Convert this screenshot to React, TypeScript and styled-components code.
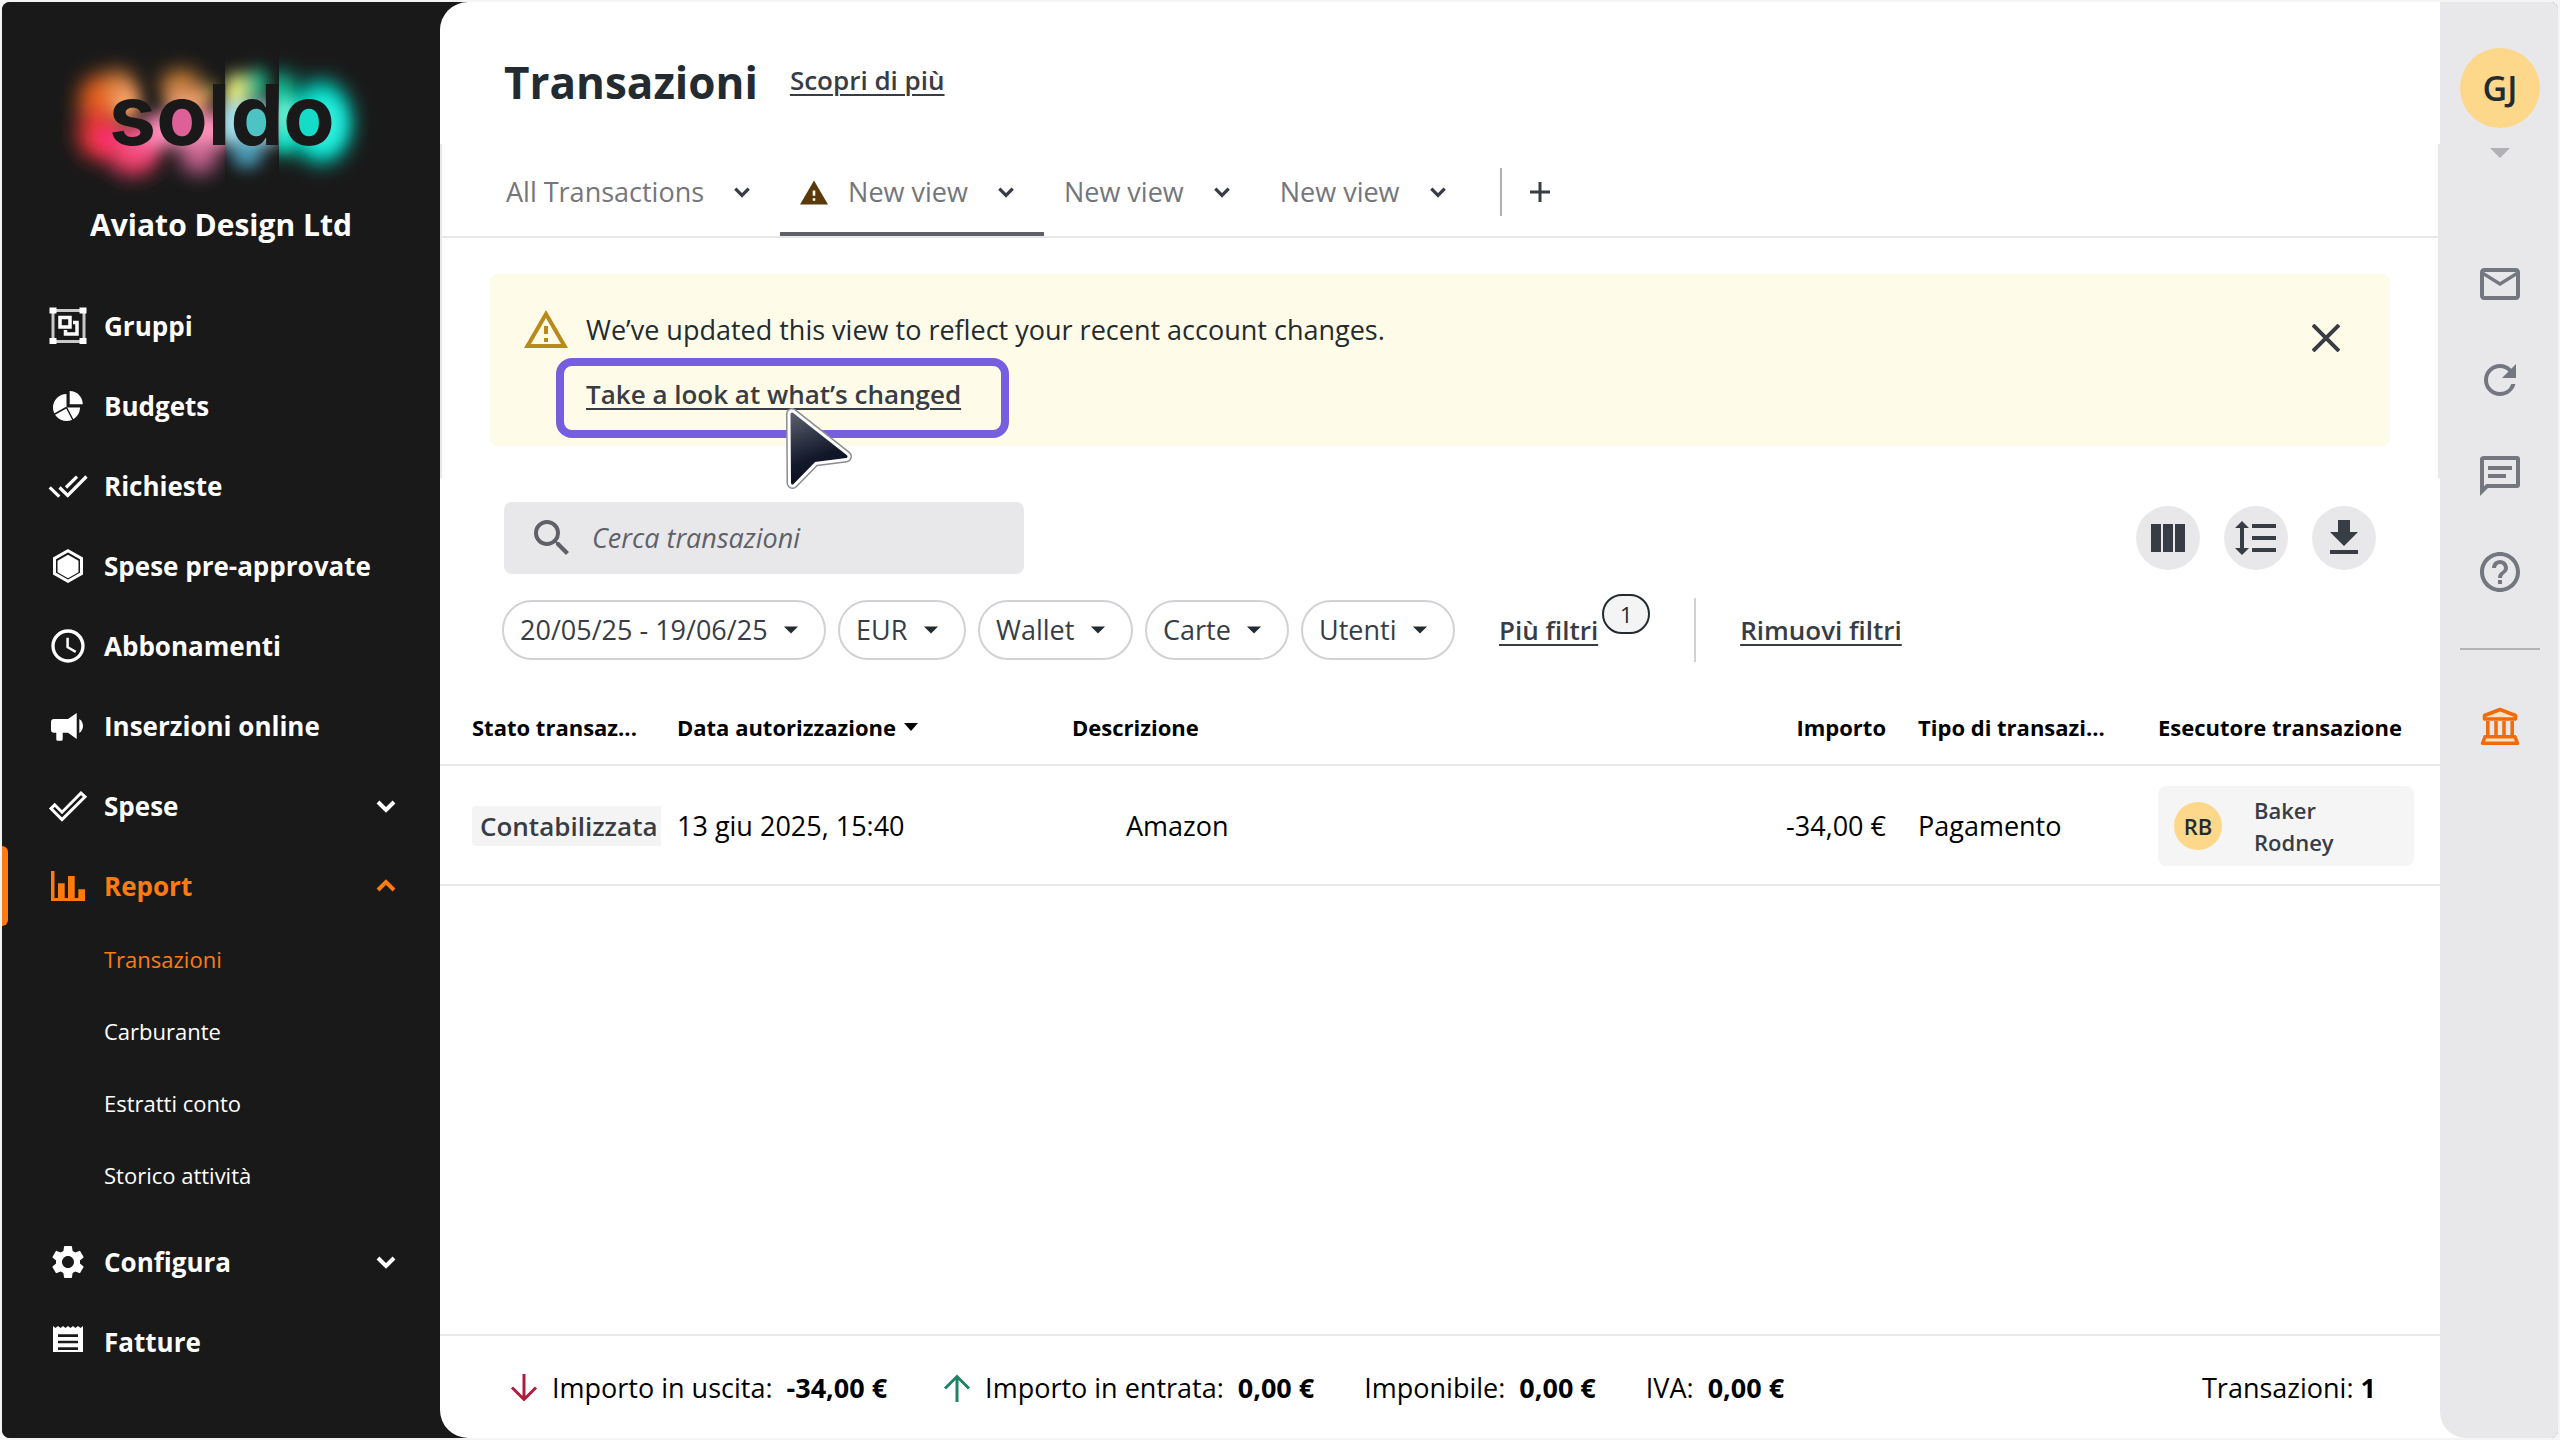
import React from "react";
import styled, { createGlobalStyle } from "styled-components";
import { MdAccessTime, MdHelpOutline, MdMailOutline, MdRefresh, MdSearch, MdSettings } from "react-icons/md";

const ink = "#383d45";
const orange = "#ff7b0f";
const line = "#e8e8ea";

const GlobalStyle = createGlobalStyle`
  *, *::before, *::after { box-sizing: border-box; }
  body {
    margin: 0;
    background: #f4f4f5;
    color: #000;
    font-family: "Open Sans", "Noto Sans", sans-serif;
    font-size: 27px;
    line-height: 40px;
  }
  button, input, select { font: inherit; color: inherit; }
  button { padding: 0; border: 0; background: none; cursor: pointer; }
  svg { display: block; flex: none; }
  h1, p, ul, dl, dd { margin: 0; padding: 0; }
  ul { list-style: none; }
`;

const Page = styled.div`
  min-height: 100vh;
  padding: 2px;
  display: flex;
`;

const Shell = styled.div`
  flex: 1;
  display: grid;
  grid-template-columns: 438px minmax(0, 1fr) 118px;
  border-radius: 8px;
  overflow: hidden;
  background: #191919;
`;

/* ---------- Sidebar ---------- */

const Sidebar = styled.aside`
  padding: 38px 0;
  background: #191919;
  color: #fff;
`;

const LogoBox = styled.div`
  display: flex;
  justify-content: center;
`;

const Company = styled.p`
  margin-bottom: 36px;
  text-align: center;
  font-size: 30px;
  font-weight: 700;
  line-height: 50px;
`;

const NavLink = styled.a<{ $active?: boolean }>`
  height: 80px;
  padding: 0 42px 0 46px;
  display: flex;
  align-items: center;
  gap: 16px;
  position: relative;
  color: ${(p) => (p.$active ? orange : "#fff")};
  font-size: 26px;
  font-weight: 700;
  text-decoration: none;

  &::before {
    content: "";
    display: ${(p) => (p.$active ? "block" : "none")};
    position: absolute;
    inset: 0 auto 0 0;
    width: 6px;
    border-radius: 0 6px 6px 0;
    background: ${orange};
  }
`;

const NavText = styled.span`
  flex: 1;
`;

const SubList = styled.ul`
  padding-bottom: 8px;
`;

const SubLink = styled.a<{ $active?: boolean }>`
  height: 72px;
  padding: 0 42px 6px 102px;
  display: flex;
  align-items: center;
  color: ${(p) => (p.$active ? orange : "#fff")};
  font-size: 22px;
  text-decoration: none;
`;

/* ---------- Main column ---------- */

const MainWrap = styled.div`
  display: flex;
  background: linear-gradient(to right, #191919 50%, #fff 50%);
`;

const Main = styled.main`
  flex: 1;
  min-width: 0;
  display: flex;
  flex-direction: column;
  border-radius: 28px 0 0 28px;
  background: #fff;
`;

const Header = styled.header`
  height: 142px;
  padding: 48px 64px 0;
  display: flex;
  align-items: flex-start;
  gap: 32px;
`;

const Title = styled.h1`
  color: #232b30;
  font-size: 44px;
  line-height: 64px;
`;

const TextLink = styled.a`
  color: ${ink};
  font-size: 26px;
  font-weight: 600;
  line-height: 40px;
  text-decoration: underline;
  text-decoration-thickness: 2px;
  text-underline-offset: 4px;
`;

const HeaderLink = styled(TextLink)`
  line-height: 60px;
`;

const ViewSection = styled.section`
  padding-bottom: 32px;
  border: solid ${line};
  border-width: 0 2px;
`;

const Tabs = styled.nav`
  height: 94px;
  padding-left: 44px;
  display: flex;
  align-items: stretch;
  border-bottom: 2px solid ${line};
`;

const Tab = styled.button<{ $active?: boolean }>`
  padding: 8px 20px 0;
  display: flex;
  align-items: center;
  gap: 20px;
  border-bottom: 4px solid ${(p) => (p.$active ? "#5f6068" : "transparent")};
  color: #75757c;
`;

const TabChevron = styled.span`
  width: 36px;
  display: flex;
  justify-content: center;
  color: ${ink};
`;

const AddView = styled.div`
  margin: 24px 0 0 24px;
  height: 48px;
  padding-left: 16px;
  display: flex;
  border-left: 2px solid #b0b0b4;
  color: ${ink};
`;

const AddButton = styled.button`
  width: 44px;
  display: flex;
  align-items: center;
  justify-content: center;
`;

const Banner = styled.div`
  margin: 36px 48px 0;
  padding: 36px 40px 32px 32px;
  display: flex;
  gap: 16px;
  border-radius: 8px;
  background: #fefce8;
  color: #232b30;
`;

const BannerIcon = styled.span`
  height: 40px;
  display: flex;
  align-items: center;
  color: #b8891b;
`;

const BannerBody = styled.div`
  flex: 1;
  display: flex;
  flex-direction: column;
  align-items: flex-start;
  gap: 24px;
`;

const LinkAnchor = styled.div`
  height: 40px;
  position: relative;
`;

const Highlight = styled.span`
  position: absolute;
  inset: -16px -48px -24px -30px;
  border: 8px solid #755fdf;
  border-radius: 16px;
  pointer-events: none;
`;

const Pointer = styled.svg`
  position: absolute;
  left: 194px;
  top: 26px;
  pointer-events: none;
`;

const CloseButton = styled.button`
  width: 48px;
  height: 48px;
  margin-top: 4px;
  display: flex;
  align-items: center;
  justify-content: center;
  color: ${ink};
`;

const Toolbar = styled.div`
  padding: 24px 64px 0;
  display: flex;
  justify-content: space-between;
  align-items: center;
`;

const SearchBox = styled.label`
  width: 520px;
  height: 72px;
  padding: 0 24px;
  display: flex;
  align-items: center;
  gap: 16px;
  border-radius: 8px;
  background: ${line};
  color: #5f6068;
`;

const SearchInput = styled.input`
  flex: 1;
  min-width: 0;
  padding: 0;
  border: 0;
  outline: 0;
  background: none;
  font-style: italic;

  &::placeholder { color: #5f6068; opacity: 1; }
`;

const Actions = styled.div`
  display: flex;
  gap: 24px;
`;

const RoundButton = styled.button`
  width: 64px;
  height: 64px;
  display: flex;
  align-items: center;
  justify-content: center;
  border-radius: 50%;
  background: ${line};
  color: ${ink};
`;

const Filters = styled.div`
  padding: 24px 62px 30px;
  display: flex;
  align-items: center;
  gap: 44px;
`;

const PillGroup = styled.div`
  display: flex;
  gap: 12px;
`;

const Pill = styled.label`
  height: 60px;
  padding: 0 16px;
  display: flex;
  align-items: center;
  gap: 6px;
  border: 2px solid #d2d2d6;
  border-radius: 30px;
  color: ${ink};
`;

const PillSelect = styled.select`
  appearance: none;
  padding: 0;
  border: 0;
  outline: 0;
  background: none;
`;

const MoreFilters = styled.div`
  padding-right: 52px;
  position: relative;
`;

const CountBadge = styled.span`
  position: absolute;
  right: 0;
  top: -16px;
  width: 48px;
  height: 40px;
  display: flex;
  align-items: center;
  justify-content: center;
  border: 2px solid #232b30;
  border-radius: 20px;
  background: #f4f4f5;
  color: #232b30;
  font-size: 22px;
`;

const FilterRule = styled.span`
  width: 2px;
  height: 64px;
  background: #d2d2d6;
`;

/* ---------- Table ---------- */

const Table = styled.table`
  width: 100%;
  table-layout: fixed;
  border-collapse: separate;
  border-spacing: 0;
`;

const Col = styled.col<{ $w?: number }>`
  width: ${(p) => (p.$w ? `${p.$w}px` : "auto")};
`;

const Th = styled.th<{ $end?: boolean }>`
  height: 74px;
  padding: 0 16px 2px;
  border-bottom: 2px solid ${line};
  font-size: 22px;
  line-height: 32px;
  text-align: ${(p) => (p.$end ? "right" : "left")};
  white-space: nowrap;

  &:first-child { padding: 0 0 2px 32px; }
`;

const SortButton = styled.button`
  display: inline-flex;
  align-items: center;
  gap: 8px;
  vertical-align: top;
`;

const Td = styled.td<{ $end?: boolean; $indent?: boolean }>`
  height: 120px;
  padding: 2px 16px 0 ${(p) => (p.$indent ? 70 : 16)}px;
  border-bottom: 2px solid ${line};
  text-align: ${(p) => (p.$end ? "right" : "left")};
  white-space: nowrap;

  &:first-child { padding: 2px 0 0 32px; }
  &:last-child { padding-right: 26px; }
`;

const Status = styled.span`
  height: 40px;
  padding-left: 8px;
  display: block;
  border-radius: 4px 0 0 4px;
  background: #f4f4f5;
  color: ${ink};
  font-size: 26px;
  font-weight: 600;
`;

const Person = styled.div`
  height: 80px;
  padding: 0 16px;
  display: flex;
  align-items: center;
  gap: 32px;
  border-radius: 8px;
  background: #f5f5f6;
  color: ${ink};
  font-size: 22px;
  font-weight: 600;
  line-height: 32px;
`;

const Avatar = styled.span<{ $large?: boolean }>`
  width: ${(p) => (p.$large ? 80 : 48)}px;
  height: ${(p) => (p.$large ? 80 : 48)}px;
  display: flex;
  align-items: center;
  justify-content: center;
  border-radius: 50%;
  background: #fdd78a;
  color: #232b30;
  font-size: ${(p) => (p.$large ? 34 : 22)}px;
  font-weight: 600;
`;

const PersonName = styled.span`
  display: flex;
  flex-direction: column;
`;

/* ---------- Footer ---------- */

const Footer = styled.footer`
  height: 104px;
  margin-top: auto;
  padding: 2px 64px 0;
  display: flex;
  align-items: center;
  justify-content: space-between;
  border-top: 2px solid ${line};
`;

const Totals = styled.dl`
  display: flex;
  gap: 50px;
`;

const Total = styled.div`
  display: flex;
  align-items: center;
`;

const TotalIcon = styled.dt`
  width: 48px;
  padding-left: 4px;
`;

const TotalLabel = styled.dt`
  margin-right: 14px;
`;

const TotalValue = styled.dd`
  font-weight: 700;
`;

/* ---------- Right rail ---------- */

const RailWrap = styled.div`
  display: flex;
  background: #fff;
`;

const Rail = styled.aside`
  flex: 1;
  padding: 46px 0 46px 2px;
  display: flex;
  flex-direction: column;
  align-items: center;
  border-bottom-left-radius: 26px;
  background: ${line};
  color: #747780;
`;

const ProfileButton = styled.button`
  height: 164px;
  display: flex;
  flex-direction: column;
  align-items: center;
  gap: 20px;
`;

const RailIcons = styled.div`
  padding: 48px 0 52px;
  display: flex;
  flex-direction: column;
  gap: 48px;
`;

const RailRule = styled.hr`
  width: 80px;
  height: 2px;
  margin: 0 0 52px;
  border: 0;
  background: #b4b4b8;
`;

/* ---------- Icons ---------- */

const Chevron = ({ up, width = 24 }: { up?: boolean; width?: number }) => (
  <svg width={width} height={width} viewBox="0 0 24 24" fill="none" stroke="currentColor" strokeWidth="4">
    <path d={up ? "M4 16l8-8 8 8" : "M4 8l8 8 8-8"} />
  </svg>
);

const Caret = ({ w, h, fill }: { w: number; h: number; fill: string }) => (
  <svg width={w} height={h} viewBox="0 0 20 10" preserveAspectRatio="none">
    <path d="M0 0h20L10 10z" fill={fill} />
  </svg>
);

const NavSvg = ({ children }: { children: React.ReactNode }) => (
  <svg width="40" height="40" viewBox="0 0 40 40" fill="none" stroke="currentColor">{children}</svg>
);

const GroupsIcon = () => (
  <NavSvg>
    <rect x="5" y="4.5" width="31" height="31" stroke="#c9c9c9" strokeWidth="3" />
    <g fill="currentColor" stroke="none">
      <path d="M1.5 1.5h7v6h-7zM31.5 1.5h7v6h-7zM1.5 32h7v6h-7zM31.5 32h7v6h-7z" />
    </g>
    <path d="M12 11.5h10v9.500h-10z" strokeWidth="3.500" />
    <path d="M25 16.500h4v11.500h-11.500v-4" strokeWidth="3.500" />
  </NavSvg>
);

const BudgetsIcon = () => (
  <NavSvg>
    <path d="M18.500 21.500V8A13.500 13.500 0 1 0 32 21.500z" fill="currentColor" stroke="none" />
    <path d="M21.700 18.300V5a13 13 0 0 1 13 13.300z" fill="currentColor" stroke="none" />
    <path d="M18.500 21.500L5 29M18.500 21.500L25.500 35" stroke="#191919" strokeWidth="1.500" />
  </NavSvg>
);

const RequestsIcon = () => (
  <NavSvg>
    <path d="M1.700 21.300l9.600 9.400M11.500 21.500l8.200 8L38.500 10.500M18 21.500l11-10.800" strokeWidth="3.200" />
  </NavSvg>
);

const HexIcon = () => (
  <NavSvg>
    <path d="M20 4.700l13.500 7.700v15.200L20 35.300 6.500 27.600V12.400z" strokeWidth="3" />
    <path d="M20 8.800l10.500 5.900v11.600L20 32.200 9.500 26.300V14.700z" fill="currentColor" stroke="none" />
  </NavSvg>
);

const MegaphoneIcon = () => (
  <NavSvg>
    <g fill="currentColor" stroke="none">
      <path d="M6 13h14l8.700-6v26L20 26.700h-5.300v6.500q0 1.500-1.500 1.500H9.800q-1.500 0-1.500-1.500v-6.500H6q-3 0-3-3V16q0-3 3-3z" />
      <path d="M31.300 13a8.500 8.500 0 0 1 0 14z" />
    </g>
  </NavSvg>
);

const TickIcon = () => (
  <NavSvg>
    <path d="M3 22.600l3.700-3.800 7.300 7.400L33 7l4 3.800-23 22.800z" strokeWidth="3" />
  </NavSvg>
);

const ReportIcon = () => (
  <NavSvg>
    <path d="M3 5h3.500v27H10V17.300h6.700V32H20V10h6.700v22h3.600v-8.700H37V35H3z" fill="currentColor" stroke="none" />
  </NavSvg>
);

const ReceiptIcon = () => (
  <NavSvg>
    <path d="M5 4l2.500 2L10 4l2.500 2L15 4l2.500 2L20 4l2.500 2L25 4l2.500 2L30 4l2.500 2L35 4v26H5z" fill="currentColor" stroke="none" />
    <path d="M10 13.700h20M10 20h20M10 26.600h20" stroke="#191919" strokeWidth="2.700" />
  </NavSvg>
);

const AlertSolidIcon = () => (
  <svg width="28" height="25" viewBox="1 2 22 19" fill="#5a3a0a">
    <path d="M1 21h22L12 2 1 21zm12-3h-2v-2h2v2zm0-4h-2v-4h2v4z" />
  </svg>
);

const AlertOutlineIcon = () => (
  <svg width="48" height="48" viewBox="0 0 24 24" fill="currentColor">
    <path d="M12 5.990L19.530 19H4.470L12 5.990M12 2L1 21h22L12 2zm1 14h-2v2h2v-2zm0-6h-2v4h2v-4z" />
  </svg>
);

const ChatIcon = () => (
  <svg width="48" height="48" viewBox="0 0 24 24" fill="currentColor">
    <path d="M4 4h16v12H5.170L4 17.170V4m0-2c-1.100 0-2 .5-2 1.500V22l4-4h14.500c1 0 1.500-.6 1.500-1.500v-13c0-1-.5-1.500-1.500-1.500H4zM6 7h12v2H6zM6 11h9v2H6z" />
  </svg>
);

const BankIcon = () => (
  <svg width="48" height="48" viewBox="0 0 48 48" fill="#fde3c4" stroke="#f26a0a" strokeWidth="3.500" strokeLinejoin="round">
    <path d="M24 7.500l15.500 6v3.500h-31v-3.500z" />
    <path d="M11.800 19v15M20 19v15M28 19v15M36.200 19v15" strokeWidth="3.500" />
    <path d="M9 34.800h30l2.500 6.500h-35z" />
  </svg>
);

const Logo = () => (
  <svg width="340" height="160" viewBox="50 40 340 160" role="img" aria-label="soldo">
    <defs>
      <filter id="soft" x="-50%" y="-50%" width="200%" height="200%"><feGaussianBlur stdDeviation="10" /></filter>
      <filter id="mid" x="-50%" y="-50%" width="200%" height="200%"><feGaussianBlur stdDeviation="8" /></filter>
      <clipPath id="left"><rect x="40" y="30" width="184" height="180" /></clipPath>
      <clipPath id="middle"><rect x="224" y="30" width="54" height="180" /></clipPath>
      <clipPath id="right"><rect x="278" y="30" width="130" height="180" /></clipPath>
    </defs>
    <g clipPath="url(#left)">
      <g filter="url(#soft)">
        <ellipse cx="100" cy="102" rx="22" ry="28" fill="#e8601c" />
        <ellipse cx="118" cy="84" rx="15" ry="14" fill="#d8803a" />
        <ellipse cx="98" cy="134" rx="22" ry="26" fill="#e03434" />
        <ellipse cx="132" cy="156" rx="25" ry="20" fill="#e83c64" />
        <ellipse cx="180" cy="84" rx="20" ry="14" fill="#d08236" />
        <ellipse cx="198" cy="152" rx="20" ry="22" fill="#c86490" />
      </g>
      <g filter="url(#mid)">
        <ellipse cx="124" cy="102" rx="15" ry="18" fill="#ffa468" />
        <ellipse cx="106" cy="138" rx="12" ry="12" fill="#ff2e74" />
        <ellipse cx="140" cy="142" rx="22" ry="16" fill="#ff5490" />
        <rect x="146" y="114" width="86" height="32" fill="#ff90ba" />
        <rect x="166" y="88" width="40" height="24" fill="#f6a06c" />
        <ellipse cx="208" cy="92" rx="7" ry="9" fill="#b0a050" />
      </g>
    </g>
    <g clipPath="url(#middle)">
      <g filter="url(#mid)">
        <ellipse cx="236" cy="90" rx="12" ry="18" fill="#cfe07a" />
        <ellipse cx="256" cy="84" rx="11" ry="16" fill="#1fb98a" />
        <rect x="216" y="104" width="62" height="40" fill="#a4e0ee" />
        <ellipse cx="246" cy="152" rx="16" ry="16" fill="#4a9cb8" />
        <ellipse cx="230" cy="94" rx="8" ry="9" fill="#fbfb7c" />
      </g>
    </g>
    <g clipPath="url(#right)">
      <g filter="url(#soft)">
        <rect x="262" y="74" width="30" height="80" fill="#08c99c" />
        <ellipse cx="320" cy="122" rx="31" ry="42" fill="#04d4c0" />
      </g>
      <g filter="url(#mid)">
        <rect x="274" y="100" width="18" height="30" fill="#7cf4dc" />
        <rect x="276" y="134" width="16" height="12" fill="#00fff0" />
        <ellipse cx="322" cy="124" rx="20" ry="26" fill="#30f0e0" />
      </g>
    </g>
    <circle cx="180" cy="122" r="14" fill="#dd6098" />
    <circle cx="254" cy="122" r="14" fill="#4cc4c4" />
    <circle cx="308" cy="122" r="14" fill="#14dcc8" />
    <text x="221" y="145" textAnchor="middle" fill="#191919" fontFamily="Inter, sans-serif" fontWeight="700" fontSize="84">soldo</text>
  </svg>
);

const PointerArrow = () => (
  <Pointer width="80" height="96" viewBox="0 0 80 96" aria-hidden="true">
    <defs>
      <linearGradient id="arrow" x1="0" y1="0" x2="0.300" y2="1">
        <stop offset="0" stopColor="#5a5f6c" />
        <stop offset="0.700" stopColor="#12172a" />
        <stop offset="1" stopColor="#0c1020" />
      </linearGradient>
    </defs>
    <g strokeLinejoin="round">
      <path d="M12 14L66 56.500 34.500 60.500 12.500 83z" fill="#8b8c93" stroke="#8b8c93" strokeWidth="12" />
      <path d="M12 14L66 56.500 34.500 60.500 12.500 83z" fill="#fff" stroke="#fff" strokeWidth="9" />
      <path d="M12 14L66 56.500 34.500 60.500 12.500 83z" fill="url(#arrow)" stroke="url(#arrow)" strokeWidth="3" />
    </g>
  </Pointer>
);

/* ---------- Data ---------- */

type NavEntry = { label: string; icon: React.ReactNode; expand?: "open" | "closed"; children?: string[] };

const nav: NavEntry[] = [
  { label: "Gruppi", icon: <GroupsIcon /> },
  { label: "Budgets", icon: <BudgetsIcon /> },
  { label: "Richieste", icon: <RequestsIcon /> },
  { label: "Spese pre-approvate", icon: <HexIcon /> },
  { label: "Abbonamenti", icon: <MdAccessTime size={40} /> },
  { label: "Inserzioni online", icon: <MegaphoneIcon /> },
  { label: "Spese", icon: <TickIcon />, expand: "closed" },
  { label: "Report", icon: <ReportIcon />, expand: "open", children: ["Transazioni", "Carburante", "Estratti conto", "Storico attività"] },
  { label: "Configura", icon: <MdSettings size={40} />, expand: "closed" },
  { label: "Fatture", icon: <ReceiptIcon /> },
];

const tabs = [
  { id: "all", label: "All Transactions" },
  { id: "v1", label: "New view", alert: true },
  { id: "v2", label: "New view" },
  { id: "v3", label: "New view" },
];

const filters = ["20/05/25 - 19/06/25", "EUR", "Wallet", "Carte", "Utenti"];

const ArrowIcon = ({ up }: { up?: boolean }) => (
  <svg width="32" height="32" viewBox="0 0 32 32" fill="none" stroke={up ? "#208368" : "#b01c3c"} strokeWidth="3">
    <path d={up ? "M16 30V4M4 16.500L16 4.500l12 12" : "M16 2v26M4 15.500l12 12 12-12"} />
  </svg>
);

const totals = [
  { label: "Importo in uscita:", value: "-34,00 €", icon: <ArrowIcon /> },
  { label: "Importo in entrata:", value: "0,00 €", icon: <ArrowIcon up /> },
  { label: "Imponibile:", value: "0,00 €" },
  { label: "IVA:", value: "0,00 €" },
];

export default function App() {
  return (
    <Page>
      <GlobalStyle />
      <Shell>
        <Sidebar>
          <LogoBox><Logo /></LogoBox>
          <Company>Aviato Design Ltd</Company>
          <nav>
            <ul>
              {nav.map((n) => (
                <li key={n.label}>
                  <NavLink href="#" $active={n.expand === "open"}>
                    {n.icon}
                    <NavText>{n.label}</NavText>
                    {n.expand && <Chevron up={n.expand === "open"} />}
                  </NavLink>
                  {n.children && (
                    <SubList>
                      {n.children.map((c, i) => (
                        <li key={c}><SubLink href="#" $active={i === 0}>{c}</SubLink></li>
                      ))}
                    </SubList>
                  )}
                </li>
              ))}
            </ul>
          </nav>
        </Sidebar>

        <MainWrap>
          <Main>
            <Header>
              <Title>Transazioni</Title>
              <HeaderLink href="#">Scopri di più</HeaderLink>
            </Header>

            <ViewSection>
              <Tabs>
                {tabs.map((t) => (
                  <Tab key={t.id} $active={t.alert}>
                    {t.alert && <AlertSolidIcon />}
                    {t.label}
                    <TabChevron><Chevron width={20} /></TabChevron>
                  </Tab>
                ))}
                <AddView>
                  <AddButton aria-label="Add view">
                    <svg width="20" height="20" viewBox="0 0 20 20" stroke="currentColor" strokeWidth="3"><path d="M10 0v20M0 10h20" /></svg>
                  </AddButton>
                </AddView>
              </Tabs>

              <Banner>
                <BannerIcon><AlertOutlineIcon /></BannerIcon>
                <BannerBody>
                  <p>We’ve updated this view to reflect your recent account changes.</p>
                  <LinkAnchor>
                    <TextLink href="#">Take a look at what’s changed</TextLink>
                    <Highlight />
                    <PointerArrow />
                  </LinkAnchor>
                </BannerBody>
                <CloseButton aria-label="Close">
                  <svg width="28" height="28" viewBox="0 0 28 28" stroke="currentColor" strokeWidth="4"><path d="M1 1l26 26M27 1L1 27" /></svg>
                </CloseButton>
              </Banner>
            </ViewSection>

            <Toolbar>
              <SearchBox>
                <MdSearch size={48} />
                <SearchInput type="text" placeholder="Cerca transazioni" aria-label="Cerca transazioni" />
              </SearchBox>
              <Actions>
                <RoundButton aria-label="Columns">
                  <svg width="34" height="28" viewBox="0 0 34 28" fill="currentColor"><path d="M0 0h10v28H0zM12 0h10v28H12zM24 0h10v28H24z" /></svg>
                </RoundButton>
                <RoundButton aria-label="Row height">
                  <svg width="48" height="48" viewBox="0 0 24 24" fill="currentColor"><path d="M6 7h2.500L5 3.500 1.500 7H4v10H1.500L5 20.500 8.500 17H6V7zm4-2v2h12V5H10zm0 14h12v-2H10v2zm0-6h12v-2H10v2z" /></svg>
                </RoundButton>
                <RoundButton aria-label="Download">
                  <svg width="48" height="48" viewBox="0 0 24 24" fill="currentColor"><path d="M19 9h-4V3H9v6H5l7 7 7-7zM5 18v2h14v-2H5z" /></svg>
                </RoundButton>
              </Actions>
            </Toolbar>

            <Filters>
              <PillGroup>
                {filters.map((f) => (
                  <Pill key={f}>
                    <PillSelect aria-label={f}><option>{f}</option></PillSelect>
                    <svg width="34" height="34" viewBox="0 0 24 24" fill="#232b30"><path d="M7 9.500l5 5 5-5z" /></svg>
                  </Pill>
                ))}
              </PillGroup>
              <MoreFilters>
                <TextLink href="#">Più filtri</TextLink>
                <CountBadge>1</CountBadge>
              </MoreFilters>
              <FilterRule />
              <TextLink href="#">Rimuovi filtri</TextLink>
            </Filters>

            <Table>
              <colgroup>
                <Col $w={221} /><Col $w={395} /><Col /><Col $w={240} /><Col $w={240} /><Col $w={298} />
              </colgroup>
              <thead>
                <tr>
                  <Th>Stato transaz...</Th>
                  <Th><SortButton>Data autorizzazione <Caret w={14} h={8} fill="#000" /></SortButton></Th>
                  <Th>Descrizione</Th>
                  <Th $end>Importo</Th>
                  <Th>Tipo di transazi...</Th>
                  <Th>Esecutore transazione</Th>
                </tr>
              </thead>
              <tbody>
                <tr>
                  <Td><Status>Contabilizzata</Status></Td>
                  <Td>13 giu 2025, 15:40</Td>
                  <Td $indent>Amazon</Td>
                  <Td $end>-34,00 €</Td>
                  <Td>Pagamento</Td>
                  <Td>
                    <Person>
                      <Avatar>RB</Avatar>
                      <PersonName><span>Baker</span><span>Rodney</span></PersonName>
                    </Person>
                  </Td>
                </tr>
              </tbody>
            </Table>

            <Footer>
              <Totals>
                {totals.map((t) => (
                  <Total key={t.label}>
                    {t.icon && <TotalIcon>{t.icon}</TotalIcon>}
                    <TotalLabel>{t.label}</TotalLabel>
                    <TotalValue>{t.value}</TotalValue>
                  </Total>
                ))}
              </Totals>
              <span>Transazioni: <strong>1</strong></span>
            </Footer>
          </Main>
        </MainWrap>

        <RailWrap>
          <Rail>
            <ProfileButton aria-label="Profile">
              <Avatar $large>GJ</Avatar>
              <Caret w={20} h={10} fill="#b0b1b5" />
            </ProfileButton>
            <RailIcons>
              <MdMailOutline size={48} />
              <MdRefresh size={48} />
              <ChatIcon />
              <MdHelpOutline size={48} />
            </RailIcons>
            <RailRule />
            <BankIcon />
          </Rail>
        </RailWrap>
      </Shell>
    </Page>
  );
}
